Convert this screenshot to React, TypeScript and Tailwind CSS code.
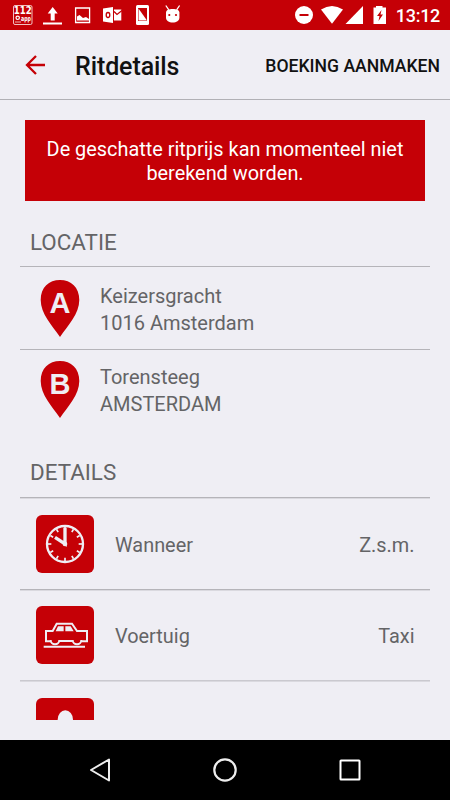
import type { ReactNode } from 'react';

export default function App() {
  return (
    <div className="flex h-[800px] w-[450px] flex-col overflow-hidden bg-[#efeef4] font-[Roboto,sans-serif]">
      <StatusBar />

      <header className="flex h-[70px] shrink-0 items-center border-b border-[#b1b0b5] pt-px pr-2.5 pl-[25px]">
        <svg className="h-5 w-5" viewBox="0 0 20 20" fill="none" stroke="#c50006" strokeWidth="2.3">
          <path d="M20 10H2M11 1l-9 9 9 9" />
        </svg>
        <h1 className="ml-[30px] pt-[3px] text-[25px] font-medium tracking-[-0.1px] text-[#111]">Ritdetails</h1>
        <button className="ml-auto pt-[2px] text-[17.6px] font-medium whitespace-nowrap text-[#111]">BOEKING AANMAKEN</button>
      </header>

      <main className="h-[620px] shrink-0 overflow-hidden px-5 pt-5">
        <div className="mx-[5px] flex h-[81px] flex-col justify-center bg-[#c50006] pt-[2px] text-center text-[19.9px] leading-6 text-white">
          <p>De geschatte ritprijs kan momenteel niet</p>
          <p>berekend worden.</p>
        </div>

        <SectionTitle className="h-[65px] pt-[17px]">LOCATIE</SectionTitle>
        <LocationRow letter="A" street="Keizersgracht" city="1016 Amsterdam" className="h-[83px] pt-[12px]" />
        <LocationRow letter="B" street="Torensteeg" city="AMSTERDAM" className="h-[82px] pt-[10px]" />

        <SectionTitle className="h-[66px] pt-[17px]">DETAILS</SectionTitle>
        <DetailRow label="Wanneer" value="Z.s.m." icon={<ClockIcon />} className="h-[92px] border-[#b5b4b9] pt-px" />
        <DetailRow label="Voertuig" value="Taxi" icon={<CarIcon />} className="h-[91px] border-[#b5b4b9]" />
        <DetailRow label="Passagiers" value="1" icon={<PersonIcon />} className="h-[92px] border-[#cac9cf]" />
      </main>

      <div className="flex-1" />
      <NavigationBar />
    </div>
  );
}

function StatusBar() {
  return (
    <div className="flex h-[30px] shrink-0 items-center bg-[#c50006] pr-2.5 pl-3 text-white">
      <svg className="h-[30px] w-[180px]" viewBox="0 0 180 30" fill="none">
        <rect x="1.5" y="5.5" width="18.5" height="19" rx="1.5" stroke="#fff" strokeOpacity=".75" />
        <text x="1.7" y="14" fontSize="10" fontWeight="700" textLength="18" lengthAdjust="spacingAndGlyphs" fill="#fff" fontFamily="DejaVu Sans">112</text>
        <text x="9" y="20.500" fontSize="7" fontWeight="700" textLength="10" lengthAdjust="spacingAndGlyphs" fill="#fff" fontFamily="DejaVu Sans">app</text>
        <circle cx="5.7" cy="17.800" r="1.700" stroke="#fff" strokeWidth="1.200" />
        <path d="M3 22h6" stroke="#fff" strokeOpacity=".7" />
        <path d="M40.700 7l5 6.500h-3v7h-4v-7h-3zM31 22.500h19v2H31z" fill="#fff" />
        <path d="M63.600 8h14v14.500h-14z" stroke="#fff" strokeWidth="1.300" />
        <path d="M65 20.500v-4l2.500-1.500 3.500 3 3-1 3 2v1.500z" fill="#fff" />
        <path d="M91 8.500 101 7v16l-10-1.500zM102 9.500h7.300v11H102z" fill="#fff" />
        <ellipse cx="96" cy="15" rx="1.800" ry="2.500" stroke="#c50006" strokeWidth="1.300" />
        <path d="M102 11.500l3 3 5-4" stroke="#c50006" strokeWidth="1.300" />
        <rect x="124" y="5" width="13" height="20" rx="1.500" fill="#fff" />
        <path d="M126 8h9v13h-9z" fill="#c50006" />
        <path d="M126.500 8.500 135 20.500h-8.500z" fill="#fff" />
        <path d="M153.800 5.500l3 4.300M167.600 5.500l-3 4.300" stroke="#fff" strokeWidth="1.300" />
        <path d="M154 12.500c0-2.500 3-3.500 6.700-3.500s6.700 1 6.700 3.500v5c0 3.300-3 5-6.700 5s-6.700-1.700-6.700-5z" fill="#fff" />
        <circle cx="157.300" cy="15" r="1.100" fill="#c50006" />
        <circle cx="164" cy="15" r="1.100" fill="#c50006" />
      </svg>
      <svg className="ml-auto h-[30px] w-[96px]" viewBox="0 0 96 30">
        <circle cx="10" cy="15" r="9" fill="#fff" />
        <path d="M5.500 14h9v2h-9z" fill="#c50006" />
        <path d="M27 9.500Q38 2.500 49 9.500L38 23.700z" fill="#fff" />
        <path d="M69 6v18H51.500z" fill="#fff" />
        <path d="M79.500 7.500h2.500V6h6.500v1.500H92V24H79.500z" fill="#fff" />
        <path d="M87.500 10l-4.500 6h2.500l-1 5 4.500-6.500h-2.500z" fill="#c50006" />
      </svg>
      <span className="w-[50px] pt-px text-right text-[18px] leading-[30px] font-medium tracking-[-0.3px] whitespace-nowrap">
        13:12
      </span>
    </div>
  );
}

function SectionTitle({ children, className }: { children: ReactNode; className: string }) {
  return (
    <h2 className={`${className} pl-2.5 text-[22.4px] leading-[48px] text-[#646466]`}>
      {children}
    </h2>
  );
}

type LocationRowProps = {
  letter: string;
  street: string;
  city: string;
  className: string;
};

function LocationRow({ letter, street, city, className }: LocationRowProps) {
  return (
    <div className={`${className} flex border-t border-[#b5b4b9] pl-5`}>
      <svg className="h-[59px] w-10" viewBox="0 0 40 59">
        <path d="M20 1C31 1 39.300 8 39.300 21 39.300 35 28 46 20 58 12 46 .7 35 .7 21 .7 8 9 1 20 1z" fill="#c50006" />
        <text x="20" y="33.500" textAnchor="middle" fontSize="29" fontWeight="700" fill="#efeef4" fontFamily="Liberation Sans">{letter}</text>
      </svg>
      <div className="mt-[4px] ml-5 text-[20px] leading-[27px] text-[#646466]">
        <p>{street}</p>
        <p>{city}</p>
      </div>
    </div>
  );
}

type DetailRowProps = {
  label: string;
  value: string;
  icon: ReactNode;
  className: string;
};

function DetailRow({ label, value, icon, className }: DetailRowProps) {
  return (
    <div className={`${className} flex items-center border-t pr-[15.5px] pl-4 text-[19.9px] text-[#646466] shadow-[inset_0_1px_0_#dad9df]`}>
      <div className="h-[58px] w-[58px] rounded-[6px] bg-[#c50006]">{icon}</div>
      <span className="ml-[21px] pt-1">{label}</span>
      <span className="ml-auto pt-1">{value}</span>
    </div>
  );
}

const ticks = [0, 30, 60, 90, 120, 150, 180, 210, 240, 270, 300, 330];

function ClockIcon() {
  return (
    <svg viewBox="0 0 174 174" fill="none" stroke="#efeef4">
      <circle cx="87" cy="87" r="54" strokeWidth="7" />
      {ticks.map((angle) => (
        <path key={angle} d="M87 36v10" strokeWidth="5" transform={`rotate(${angle} 87 87)`} />
      ))}
      <path d="M87 38v49L57 67" strokeWidth="10" />
      <circle cx="87" cy="87" r="5" fill="#efeef4" strokeWidth="4" />
    </svg>
  );
}

function CarIcon() {
  return (
    <svg viewBox="0 0 174 174" fill="none" stroke="#efeef4" strokeWidth="6">
      <path d="M45 106H30V75h20l12-22h46l15 22h30v31h-16M70 105h40" />
      <path d="M44 102a12.500 12.500 0 0 0 26 0M110 102a12.500 12.500 0 0 0 26 0" />
      <path d="M23 122h124" />
      <path d="M66 61h17v15H59zM88 61h16l9 15H88z" fill="#efeef4" stroke="none" />
    </svg>
  );
}

function PersonIcon() {
  return (
    <svg viewBox="0 0 174 174" fill="#efeef4">
      <ellipse cx="88" cy="65" rx="23" ry="28" />
      <path d="M35 145c0-32 20-45 53-45s53 13 53 45z" />
    </svg>
  );
}

function NavigationBar() {
  return (
    <nav className="flex h-[60px] shrink-0 items-center justify-between bg-black px-[87px]">
      <svg className="h-[26px] w-[26px]" viewBox="0 0 26 26" fill="none" stroke="#eee" strokeWidth="2" strokeLinejoin="round">
        <path d="M22 2.500v21L4 13z" />
      </svg>
      <svg className="h-[26px] w-[26px]" viewBox="0 0 26 26" fill="none" stroke="#eee" strokeWidth="2.200">
        <circle cx="13" cy="13" r="10.700" />
      </svg>
      <svg className="h-[26px] w-[26px]" viewBox="0 0 26 26" fill="none" stroke="#fff" strokeWidth="2">
        <rect x="3.500" y="3.500" width="19" height="19" rx=".5" />
      </svg>
    </nav>
  );
}
